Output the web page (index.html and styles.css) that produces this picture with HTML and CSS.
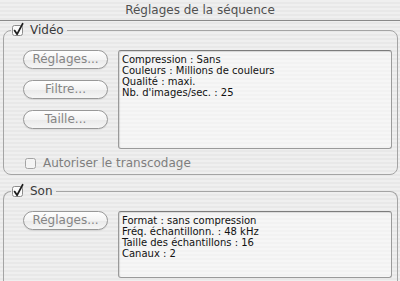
FILE: index.html
```html
<!DOCTYPE html>
<html lang="fr">
<head>
<meta charset="utf-8">
<title>Réglages de la séquence</title>
<link rel="stylesheet" href="styles.css">
</head>
<body>
<div class="window">
  <div class="title">Réglages de la séquence</div>

  <fieldset class="group video">
    <legend class="legend">
      <svg class="cb" width="12" height="14" viewBox="0 0 12 14"><rect x="0.5" y="2.5" width="10" height="10" rx="2" fill="#fbfbfb" stroke="#8c8c8c"/><path d="M2.6 7.6 L5.1 11.2 L10.6 0.8" fill="none" stroke="#1e1e1e" stroke-width="1.8" stroke-linejoin="round" stroke-linecap="round"/></svg>
      <span>Vidéo</span>
    </legend>
    <div class="body">
      <div class="row">
        <div class="buttons">
          <button class="btn">Réglages...</button>
          <button class="btn">Filtre...</button>
          <button class="btn">Taille...</button>
        </div>
        <div class="info tall">
          <div>Compression : Sans</div>
          <div>Couleurs : Millions de couleurs</div>
          <div>Qualité : maxi.</div>
          <div>Nb. d'images/sec. : 25</div>
        </div>
      </div>
      <label class="option">
        <svg class="cb" width="12" height="14" viewBox="0 0 12 14"><rect x="0.5" y="2.5" width="10" height="10" rx="2" fill="#f4f4f4" stroke="#a4a4a4"/></svg>
        <span>Autoriser le transcodage</span>
      </label>
    </div>
  </fieldset>

  <fieldset class="group son">
    <legend class="legend">
      <svg class="cb" width="12" height="14" viewBox="0 0 12 14"><rect x="0.5" y="2.5" width="10" height="10" rx="2" fill="#fbfbfb" stroke="#8c8c8c"/><path d="M2.6 7.6 L5.1 11.2 L10.6 0.8" fill="none" stroke="#1e1e1e" stroke-width="1.8" stroke-linejoin="round" stroke-linecap="round"/></svg>
      <span>Son</span>
    </legend>
    <div class="body">
      <div class="row">
        <div class="buttons">
          <button class="btn">Réglages...</button>
        </div>
        <div class="info short">
          <div>Format : sans compression</div>
          <div>Fréq. échantillonn. : 48 kHz</div>
          <div>Taille des échantillons : 16</div>
          <div>Canaux : 2</div>
        </div>
      </div>
    </div>
  </fieldset>
</div>
</body>
</html>
```

FILE: styles.css
```css
html, body {
  margin: 0;
  padding: 0;
  height: 281px;
  overflow: hidden;
}
body {
  font-family: "DejaVu Sans", "Liberation Sans", sans-serif;
  background: repeating-linear-gradient(to bottom, #efefef 0, #efefef 2px, #e8e8e8 2px, #e8e8e8 4px);
  color: #222;
}
.window {
  width: 400px;
}
.title {
  height: 20px;
  line-height: 20px;
  text-align: center;
  font-size: 12px;
  color: #505050;
  border-bottom: 1px solid #8a8a8a;
}
.group {
  margin: 2px 2px 0 3px;
  padding: 0;
  border: 1px solid #a4a4a4;
  border-radius: 8px;
  min-inline-size: 0;
}
.group.son {
  margin-top: 9px;
  border-bottom: none;
}
.legend {
  margin-left: 7px;
  padding: 0 3px 0 1px;
  height: 14px;
  display: flex;
  align-items: center;
  gap: 6px;
  font-size: 12px;
  line-height: 14px;
  color: #3a3a3a;
}
.cb {
  display: block;
  flex: none;
  overflow: visible;
}
.body {
  padding: 13px 5px 4px 19px;
}
.son .body {
  padding-top: 13px;
  padding-bottom: 10px;
}
.row {
  display: flex;
  gap: 10px;
}
.buttons {
  width: 85px;
  display: flex;
  flex-direction: column;
  gap: 11px;
}
.btn {
  height: 19px;
  width: 85px;
  padding: 0;
  border: 1px solid #989898;
  border-radius: 10px;
  background: linear-gradient(to bottom, #fefefe 0%, #f3f3f3 50%, #e9e9e9 51%, #f6f6f6 100%);
  box-shadow: 0 1px 1px rgba(0,0,0,0.08);
  font-family: "DejaVu Sans", "Liberation Sans", sans-serif;
  font-size: 12px;
  line-height: 17px;
  color: #858585;
  text-align: center;
}
.info {
  flex: 1;
  box-sizing: border-box;
  border: 1px solid #9a9a9a;
  border-top-color: #7c7c7c;
  border-radius: 3px;
  background: rgba(255,255,255,0.45);
  box-shadow: inset 1px 1px 1px rgba(0,0,0,0.12);
  padding: 3px 3px;
  font-size: 10px;
  line-height: 11px;
  color: #111;
}
.info.tall {
  height: 99px;
}
.info.short {
  height: 67px;
}
.option {
  display: flex;
  align-items: center;
  gap: 6px;
  margin: 7px 0 0 2px;
  height: 14px;
  font-size: 12px;
  color: #7e7e7e;
}
```
